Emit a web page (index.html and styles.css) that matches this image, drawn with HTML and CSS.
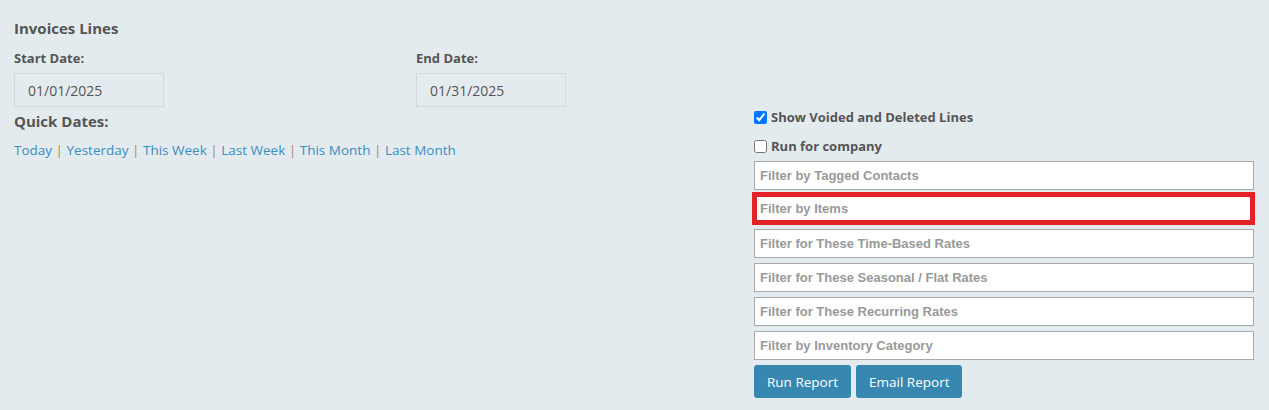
FILE: index.html
```html
<!DOCTYPE html>
<html lang="en">
<head>
    <meta charset="UTF-8">
    <title>Invoices Lines</title>
    <link rel="stylesheet" href="styles.css">
</head>
<body>
    <div class="report">
        <!-- Dates -->
        <div class="left-col">
            <h3 class="title">Invoices Lines</h3>
            <div class="date-row">
                <div class="date-field">
                    <label class="field-label">Start Date:</label>
                    <input type="text" class="date-input" value="01/01/2025">
                </div>
                <div class="date-field">
                    <label class="field-label">End Date:</label>
                    <input type="text" class="date-input" value="01/31/2025">
                </div>
            </div>
            <h4 class="quick-title">Quick Dates:</h4>
            <div class="quick-links">
                <a href="#">Today</a> <span class="sep">|</span>
                <a href="#">Yesterday</a> <span class="sep">|</span>
                <a href="#">This Week</a> <span class="sep">|</span>
                <a href="#">Last Week</a> <span class="sep">|</span>
                <a href="#">This Month</a> <span class="sep">|</span>
                <a href="#">Last Month</a>
            </div>
        </div>

        <!-- Filters -->
        <div class="right-col">
            <label class="check"><input type="checkbox" checked> Show Voided and Deleted Lines</label>
            <label class="check second"><input type="checkbox"> Run for company</label>
            <div class="filters">
                <input type="text" class="filter" placeholder="Filter by Tagged Contacts">
                <input type="text" class="filter highlight" placeholder="Filter by Items">
                <input type="text" class="filter" placeholder="Filter for These Time-Based Rates">
                <input type="text" class="filter" placeholder="Filter for These Seasonal / Flat Rates">
                <input type="text" class="filter" placeholder="Filter for These Recurring Rates">
                <input type="text" class="filter" placeholder="Filter by Inventory Category">
            </div>
            <div class="buttons">
                <button class="btn">Run Report</button>
                <button class="btn">Email Report</button>
            </div>
        </div>
    </div>
</body>
</html>
```

FILE: styles.css
```css
/* Page */
body {
    margin: 0;
    background-color: #e4ebee;
    font-family: "Open Sans", "Noto Sans", sans-serif;
    color: #555;
}

.report {
    display: flex;
}

.left-col {
    width: 712px;
    padding: 0 14px;
    flex: none;
}

.right-col {
    flex: 1;
    padding: 107px 15px 0 14px;
}

/* Left side */
.title {
    margin: 18px 0 0;
    font-size: 15px;
    line-height: 20px;
    font-weight: 700;
}

.date-row {
    display: flex;
    margin-top: 10px;
}

.date-field {
    flex: none;
    width: 402px;
}

.field-label {
    display: block;
    font-size: 13px;
    font-weight: 700;
    line-height: 20px;
}

.date-input {
    box-sizing: border-box;
    width: 150px;
    height: 34px;
    margin-top: 5px;
    padding: 0 13px;
    border: 1px solid #d3d8da;
    background: transparent;
    font-family: "Open Sans", sans-serif;
    font-size: 14px;
    color: #555;
    outline: none;
}

.quick-title {
    margin: 4px 0 0;
    font-size: 15px;
    line-height: 20px;
    font-weight: 700;
}

.quick-links {
    margin-top: 9px;
    font-size: 13.5px;
    line-height: 20px;
}

.quick-links a {
    color: #3a8dc0;
    text-decoration: none;
}

.sep {
    color: #a8875f;
}

/* Right side */
.check {
    display: flex;
    align-items: center;
    font-size: 13px;
    font-weight: 700;
    line-height: 20px;
}

.check input {
    width: 13px;
    height: 13px;
    margin: 0 4px 0 0;
}

.check.second {
    margin-top: 9px;
}

.filters {
    display: flex;
    flex-direction: column;
    margin-top: 5px;
}

.filter {
    box-sizing: border-box;
    height: 29px;
    margin-bottom: 5px;
    padding: 0 5px;
    border: 1px solid #a9a9a9;
    background: #fff;
    font-family: "Liberation Sans", Arial, sans-serif;
    font-size: 13px;
    outline: none;
}

.filter::placeholder {
    color: #999;
    font-weight: 700;
}

.filter.highlight {
    height: 33px;
    margin: -3px -1px 4px -2px;
    padding: 0 3px;
    border: 5px solid #e52128;
}

.buttons {
    display: flex;
    gap: 5px;
}

.btn {
    height: 33px;
    padding: 0 13px;
    border: none;
    border-radius: 3px;
    background-color: #3787b0;
    color: #fff;
    font-family: "Open Sans", sans-serif;
    font-size: 13.5px;
    cursor: pointer;
}
```
